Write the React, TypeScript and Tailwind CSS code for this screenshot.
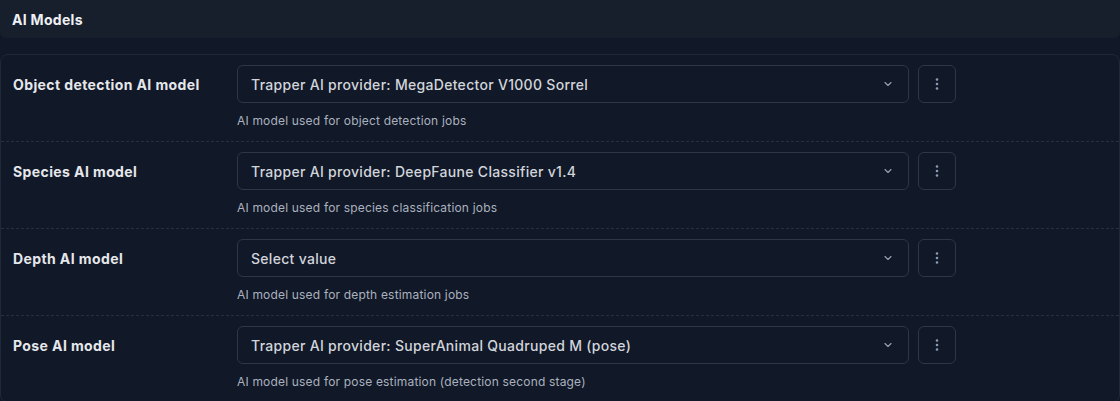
import React from "react";

const rows = [
  {
    label: "Object detection AI model",
    value: "Trapper AI provider: MegaDetector V1000 Sorrel",
    help: "AI model used for object detection jobs",
  },
  {
    label: "Species AI model",
    value: "Trapper AI provider: DeepFaune Classifier v1.4",
    help: "AI model used for species classification jobs",
  },
  {
    label: "Depth AI model",
    value: "Select value",
    help: "AI model used for depth estimation jobs",
  },
  {
    label: "Pose AI model",
    value: "Trapper AI provider: SuperAnimal Quadruped M (pose)",
    help: "AI model used for pose estimation (detection second stage)",
  },
];

function Chevron() {
  return (
    <svg width="12" height="12" viewBox="0 0 24 24" fill="none" stroke="#9ca3af" strokeWidth="2.2" strokeLinecap="round" strokeLinejoin="round">
      <path d="M6 9l6 6 6-6" />
    </svg>
  );
}

function Kebab() {
  return (
    <svg width="4" height="12" viewBox="0 0 4 12" fill="#8b9bb4">
      <circle cx="2" cy="1.5" r="1.3" />
      <circle cx="2" cy="6" r="1.3" />
      <circle cx="2" cy="10.5" r="1.3" />
    </svg>
  );
}

export default function App() {
  return (
    <div className="w-[1120px] h-[401px] overflow-hidden bg-[#111827] font-['Inter',sans-serif]">
      <div className="h-[38px] bg-[#171f2d] rounded-b-md flex items-center px-3">
        <span className="text-[14px] font-bold text-[#eef0f4] tracking-[0.3px]">AI Models</span>
      </div>
      <div className="mt-4 border border-[#1f2937] rounded-lg bg-[#111827]">
        {rows.map((r, i) => (
          <div
            key={i}
            className={`flex px-3 pt-[10px] pb-[12px] ${i < rows.length - 1 ? "border-b border-dashed border-[#243042]" : ""}`}
          >
            <div className="w-[224px] h-[38px] flex items-center">
              <span className="text-[14px] font-bold text-[#e5e7eb] tracking-[0.4px]">{r.label}</span>
            </div>
            <div className="flex flex-col">
              <div className="flex gap-[9px]">
                <div className="w-[672px] h-[38px] border border-[#2d3748] rounded-md flex items-center justify-between pl-[13px] pr-[14px]">
                  <span className="text-[14px] font-medium text-[#d1d5db] tracking-[0.3px]">{r.value}</span>
                  <Chevron />
                </div>
                <div className="w-[38px] h-[38px] border border-[#2d3748] rounded-md flex items-center justify-center">
                  <Kebab />
                </div>
              </div>
              <div className="mt-[10px] text-[12px] leading-4 text-[#aab2bf] tracking-[0.18px]">{r.help}</div>
            </div>
          </div>
        ))}
      </div>
    </div>
  );
}
